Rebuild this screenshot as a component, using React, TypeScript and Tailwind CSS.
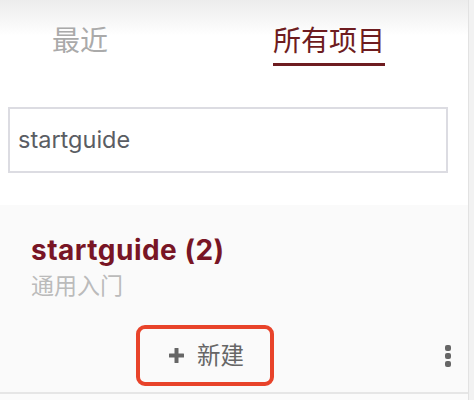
const font = { fontFamily: "Inter, 'Noto Sans CJK SC', sans-serif" };

export default function App() {
  return (
    <div
      className="w-[474px] h-[400px] flex overflow-hidden bg-white"
      style={font}
    >
      <div className="w-[468px] flex flex-col">
        {/* tabs */}
        <div className="h-[100px] bg-[linear-gradient(to_bottom,#ececec,#ffffff_36px)] flex items-start pt-[24px]">
          <div className="ml-[52px] w-[56px] text-[28px] leading-[34px] text-[#aaaaaa]">
            最近
          </div>
          <div className="ml-[165px] flex flex-col items-center">
            <div className="text-[28px] leading-[34px] text-[#6e1c20]">所有项目</div>
            <div className="mt-[5px] w-[112px] h-[3px] bg-[#6e1c20]" />
          </div>
        </div>

        {/* search */}
        <div className="px-[8px] pt-[7px] pr-[20px]">
          <div className="h-[66px] border-2 border-[#dcdce2] flex items-center px-[8px]">
            <span className="text-[23.5px] text-[#5a5d63]">startguide</span>
          </div>
        </div>

        {/* project card */}
        <div className="mt-[32px] h-[189px] bg-[#fafafa] border-b-2 border-[#e6e6e6] flex flex-col">
          <div className="pl-[31px] pt-[28px]">
            <div className="text-[28px] leading-[34px] tracking-[0.5px] font-bold text-[#781525]">
              startguide (2)
            </div>
            <div className="mt-[4px] text-[23px] leading-[30px] text-[#bbbbbb]">通用入门</div>
          </div>
          <div className="mt-auto mb-[6px] relative flex pl-[136px]">
            <button className="w-[138px] h-[61px] border-[4px] border-[#e8432a] rounded-[9px] flex items-center pl-[29px] gap-[13px] text-[#666666]">
              <svg width="15" height="15" viewBox="0 0 15 15" fill="#666666">
                <rect x="5.5" y="0" width="4" height="15" rx="0.5" />
                <rect x="0" y="5.5" width="15" height="4" rx="0.5" />
              </svg>
              <span className="text-[23.5px]">新建</span>
            </button>
            <div className="absolute right-[17px] top-[20px] flex flex-col gap-[2px]">
              <span className="w-[6px] h-[6px] rounded-[2px] bg-[#666666]" />
              <span className="w-[6px] h-[6px] rounded-[2px] bg-[#666666]" />
              <span className="w-[6px] h-[6px] rounded-[2px] bg-[#666666]" />
            </div>
          </div>
        </div>
        <div className="flex-1 bg-[#fbfbfb]" />
      </div>
      <div className="w-[6px] h-full bg-[#f2f2f2] border-l border-[#e2e2e2]" />
    </div>
  );
}
